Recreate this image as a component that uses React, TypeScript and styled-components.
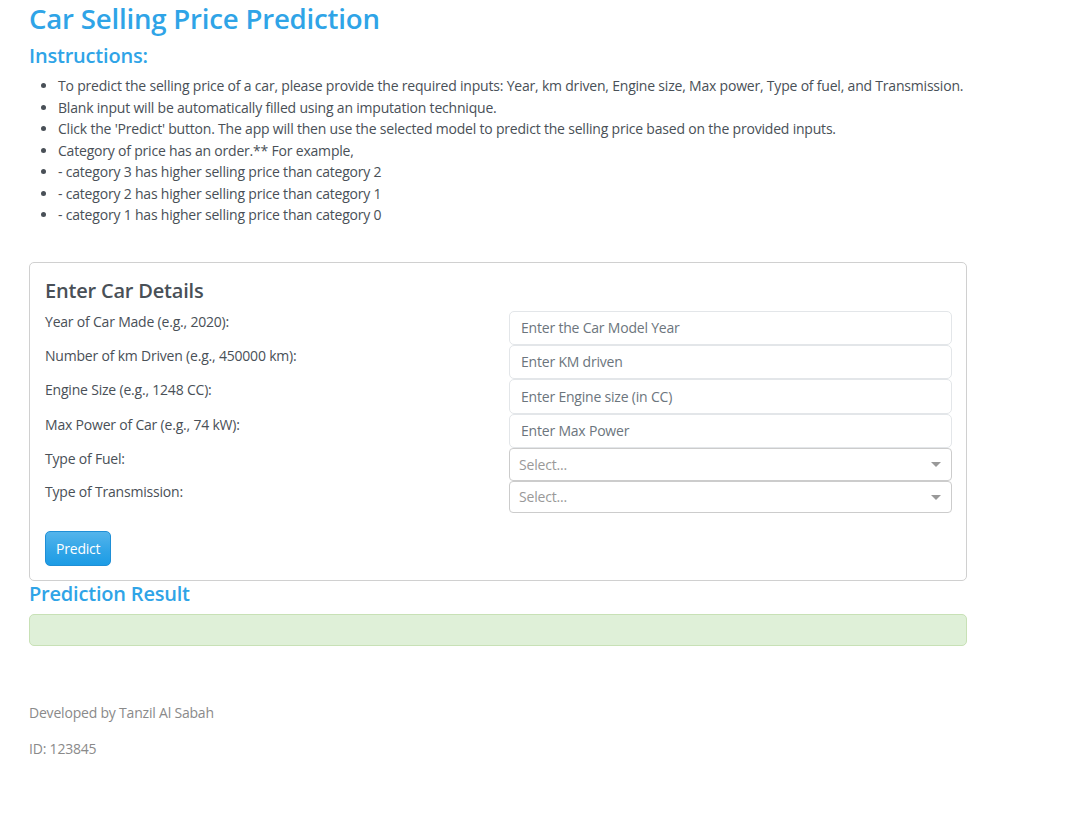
import React from "react";
import styled, { createGlobalStyle } from "styled-components";

const Global = createGlobalStyle`
  html, body { margin: 0; padding: 0; background: #fff; }
  body {
    font-family: "Open Sans", "Noto Sans", "Liberation Sans", sans-serif;
    color: #495057;
    font-size: 14px;
  }
  * { box-sizing: border-box; }
`;

const Page = styled.div`
  width: 938px;
  margin-left: 29px;
  padding-top: 1px;
`;

const Title = styled.h1`
  margin: 0;
  font-size: 27.6px;
  font-weight: 600;
  line-height: 34px;
  color: #2fa4e7;
  letter-spacing: -0.2px;
`;

const SubTitle = styled.h2`
  margin: 7px 0 0;
  font-size: 20px;
  font-weight: 600;
  line-height: 28px;
  color: #2fa4e7;
  letter-spacing: -0.2px;
`;

const List = styled.ul`
  margin: 5px 0 0;
  padding-left: 29px;
  font-size: 14px;
  line-height: 21.5px;
  color: #495057;
  letter-spacing: -0.2px;
`;

const Card = styled.section`
  margin-top: 36px;
  border: 1px solid #d0d0d0;
  border-radius: 5px;
  padding: 13px 14px 14px 15px;
`;

const CardTitle = styled.h3`
  margin: 0 0 5px;
  font-size: 20px;
  font-weight: 600;
  line-height: 30px;
  color: #495057;
  letter-spacing: -0.2px;
`;

const Row = styled.div<{ $h: number }>`
  display: grid;
  grid-template-columns: 464px 1fr;
  align-items: start;
  height: ${(p) => p.$h}px;
`;

const Label = styled.label`
  padding-top: 1px;
  font-size: 14px;
  line-height: 20px;
  color: #495057;
  letter-spacing: -0.2px;
`;

const Input = styled.input`
  width: 100%;
  height: 100%;
  border: 1px solid #e3e6e9;
  border-radius: 5px;
  padding: 0 11px;
  font-family: inherit;
  font-size: 14px;
  color: #495057;
  letter-spacing: -0.2px;
  outline: none;
  &::placeholder { color: #6c757d; }
`;

const Select = styled.div`
  position: relative;
  height: 100%;
  border: 1px solid #cccccc;
  border-radius: 4px;
  display: flex;
  align-items: center;
  padding: 0 9px;
  color: #999;
  font-size: 14px;
  letter-spacing: -0.2px;
`;

const Caret = styled.span`
  position: absolute;
  right: 10px;
  top: 50%;
  margin-top: -2px;
  width: 0;
  height: 0;
  border-left: 5px solid transparent;
  border-right: 5px solid transparent;
  border-top: 5px solid #999;
`;

const Button = styled.button`
  margin-top: 18px;
  height: 35px;
  padding: 0 10px;
  border: 1px solid #1f8fd6;
  border-radius: 5px;
  background: linear-gradient(#54b4eb, #2fa4e7 60%, #1d9ce5);
  color: #fff;
  font-family: inherit;
  font-size: 14px;
  letter-spacing: -0.2px;
  cursor: pointer;
`;

const ResultTitle = styled.h3`
  margin: -1px 0 0;
  font-size: 20px;
  font-weight: 600;
  line-height: 28px;
  color: #2fa4e7;
  letter-spacing: -0.2px;
`;

const Alert = styled.div`
  margin-top: 6px;
  height: 32px;
  background: #dff0d8;
  border: 1px solid #c8e1b6;
  border-radius: 5px;
`;

const Footer = styled.footer`
  margin-top: 57px;
  color: #8a8a8a;
  font-size: 14px;
  letter-spacing: -0.2px;
  p { margin: 0 0 16px; line-height: 20px; }
`;

const fields = [
  { label: "Year of Car Made (e.g., 2020):", ph: "Enter the Car Model Year", h: 34 },
  { label: "Number of km Driven (e.g., 450000 km):", ph: "Enter KM driven", h: 34 },
  { label: "Engine Size (e.g., 1248 CC):", ph: "Enter Engine size (in CC)", h: 35 },
  { label: "Max Power of Car (e.g., 74 kW):", ph: "Enter Max Power", h: 34 },
];

const selects = [
  { label: "Type of Fuel:", h: 33 },
  { label: "Type of Transmission:", h: 32 },
];

export default function App() {
  return (
    <>
      <Global />
      <Page>
        <Title>Car Selling Price Prediction</Title>
        <SubTitle>Instructions:</SubTitle>
        <List>
          <li>To predict the selling price of a car, please provide the required inputs: Year, km driven, Engine size, Max power, Type of fuel, and Transmission.</li>
          <li>Blank input will be automatically filled using an imputation technique.</li>
          <li>Click the 'Predict' button. The app will then use the selected model to predict the selling price based on the provided inputs.</li>
          <li>Category of price has an order.** For example,</li>
          <li>- category 3 has higher selling price than category 2</li>
          <li>- category 2 has higher selling price than category 1</li>
          <li>- category 1 has higher selling price than category 0</li>
        </List>
        <Card>
          <CardTitle>Enter Car Details</CardTitle>
          {fields.map((f) => (
            <Row key={f.label} $h={f.h}>
              <Label>{f.label}</Label>
              <Input placeholder={f.ph} />
            </Row>
          ))}
          {selects.map((s) => (
            <Row key={s.label} $h={s.h}>
              <Label>{s.label}</Label>
              <Select>
                Select...
                <Caret />
              </Select>
            </Row>
          ))}
          <Button>Predict</Button>
        </Card>
        <ResultTitle>Prediction Result</ResultTitle>
        <Alert />
        <Footer>
          <p>Developed by Tanzil Al Sabah</p>
          <p>ID: 123845</p>
        </Footer>
      </Page>
    </>
  );
}
